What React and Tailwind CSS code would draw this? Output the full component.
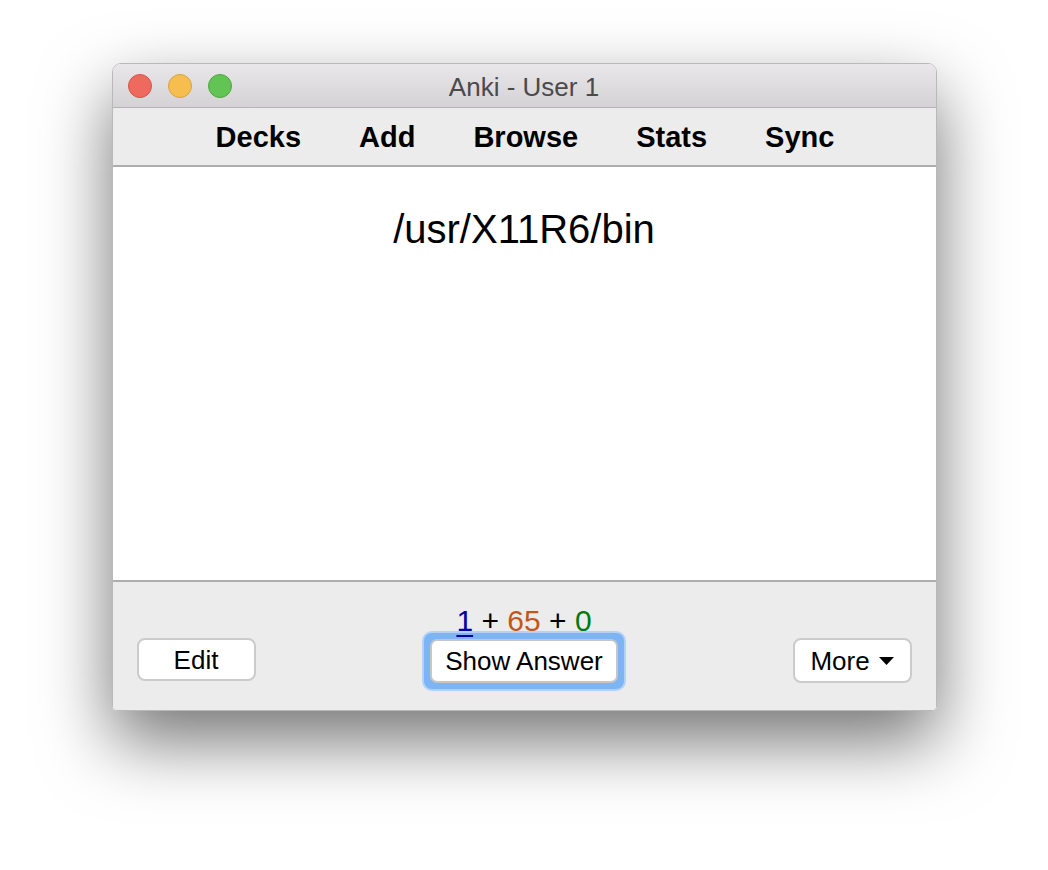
import React from "react";

const NAV = ["Decks", "Add", "Browse", "Stats", "Sync"];

export default function App() {
  return (
    <div
      className="w-[1048px] h-[870px] bg-white pt-[63px]"
      style={{ fontFamily: '"Liberation Sans", Arial, sans-serif' }}
    >
      {/* Window */}
      <div className="mx-auto w-[825px] h-[648px] flex flex-col rounded-t-[9px] rounded-b-[5px] overflow-hidden border border-[#b9b9b9] shadow-[0_30px_70px_rgba(0,0,0,0.55)]">
        {/* Title bar */}
        <div className="relative h-[44px] shrink-0 flex items-center justify-center bg-gradient-to-b from-[#e9e7e9] to-[#d4d2d4] border-b border-[#b4b4b4]">
          <div className="absolute left-[15px] top-[10px] flex gap-[16px]">
            <span className="w-[24px] h-[24px] rounded-full bg-[#ee6a5e] border border-[#d5544a]" />
            <span className="w-[24px] h-[24px] rounded-full bg-[#f6be4f] border border-[#d9a140]" />
            <span className="w-[24px] h-[24px] rounded-full bg-[#61c454] border border-[#4ea743]" />
          </div>
          <span className="text-[26px] text-[#4a4a4a] leading-none mt-[2px]">Anki - User 1</span>
        </div>

        {/* Toolbar */}
        <div className="h-[59px] shrink-0 flex items-center justify-center gap-[58px] bg-[#ececec] border-b-2 border-[#adadad] pl-[2px] pt-[2px]">
          {NAV.map((n) => (
            <span key={n} className="text-[29px] font-bold text-black leading-none">
              {n}
            </span>
          ))}
        </div>

        {/* Card */}
        <div className="flex-1 bg-white flex justify-center pt-[42px]">
          <span className="text-[40px] text-black leading-none">/usr/X11R6/bin</span>
        </div>

        {/* Bottom bar */}
        <div className="h-[130px] shrink-0 bg-[#ececec] border-t-2 border-[#adadad] flex items-start justify-between px-[24px] pt-[56px]">
          <button className="w-[119px] h-[43px] rounded-[8px] bg-white border-2 border-[#cbcbcb] text-[26px] text-black leading-none">
            Edit
          </button>

          <div className="flex flex-col items-center -mt-[32px]">
            <div className="text-[30px] leading-none text-black -mb-[3px] relative">
              <span className="text-[#0000a8] underline underline-offset-[4px] decoration-[2px]">1</span>
              {" + "}
              <span className="text-[#c4561b]">65</span>
              {" + "}
              <span className="text-[#00790e]">0</span>
            </div>
            <div className="rounded-[8px] bg-[#7db4f4] p-[6px] shadow-[0_0_0_2px_#b2d2f8]">
              <button className="w-[188px] h-[44px] rounded-[7px] bg-white border-2 border-[#c6c6c6] text-[26px] text-black leading-none">
                Show Answer
              </button>
            </div>
          </div>

          <button className="w-[119px] h-[45px] rounded-[8px] bg-white border-2 border-[#cbcbcb] text-[26px] text-black leading-none flex items-center justify-center gap-[9px]">
            <span>More</span>
            <svg width="15" height="8" viewBox="0 0 15 8">
              <path d="M0 0 L15 0 L7.5 8 Z" fill="#000" />
            </svg>
          </button>
        </div>
      </div>
    </div>
  );
}
